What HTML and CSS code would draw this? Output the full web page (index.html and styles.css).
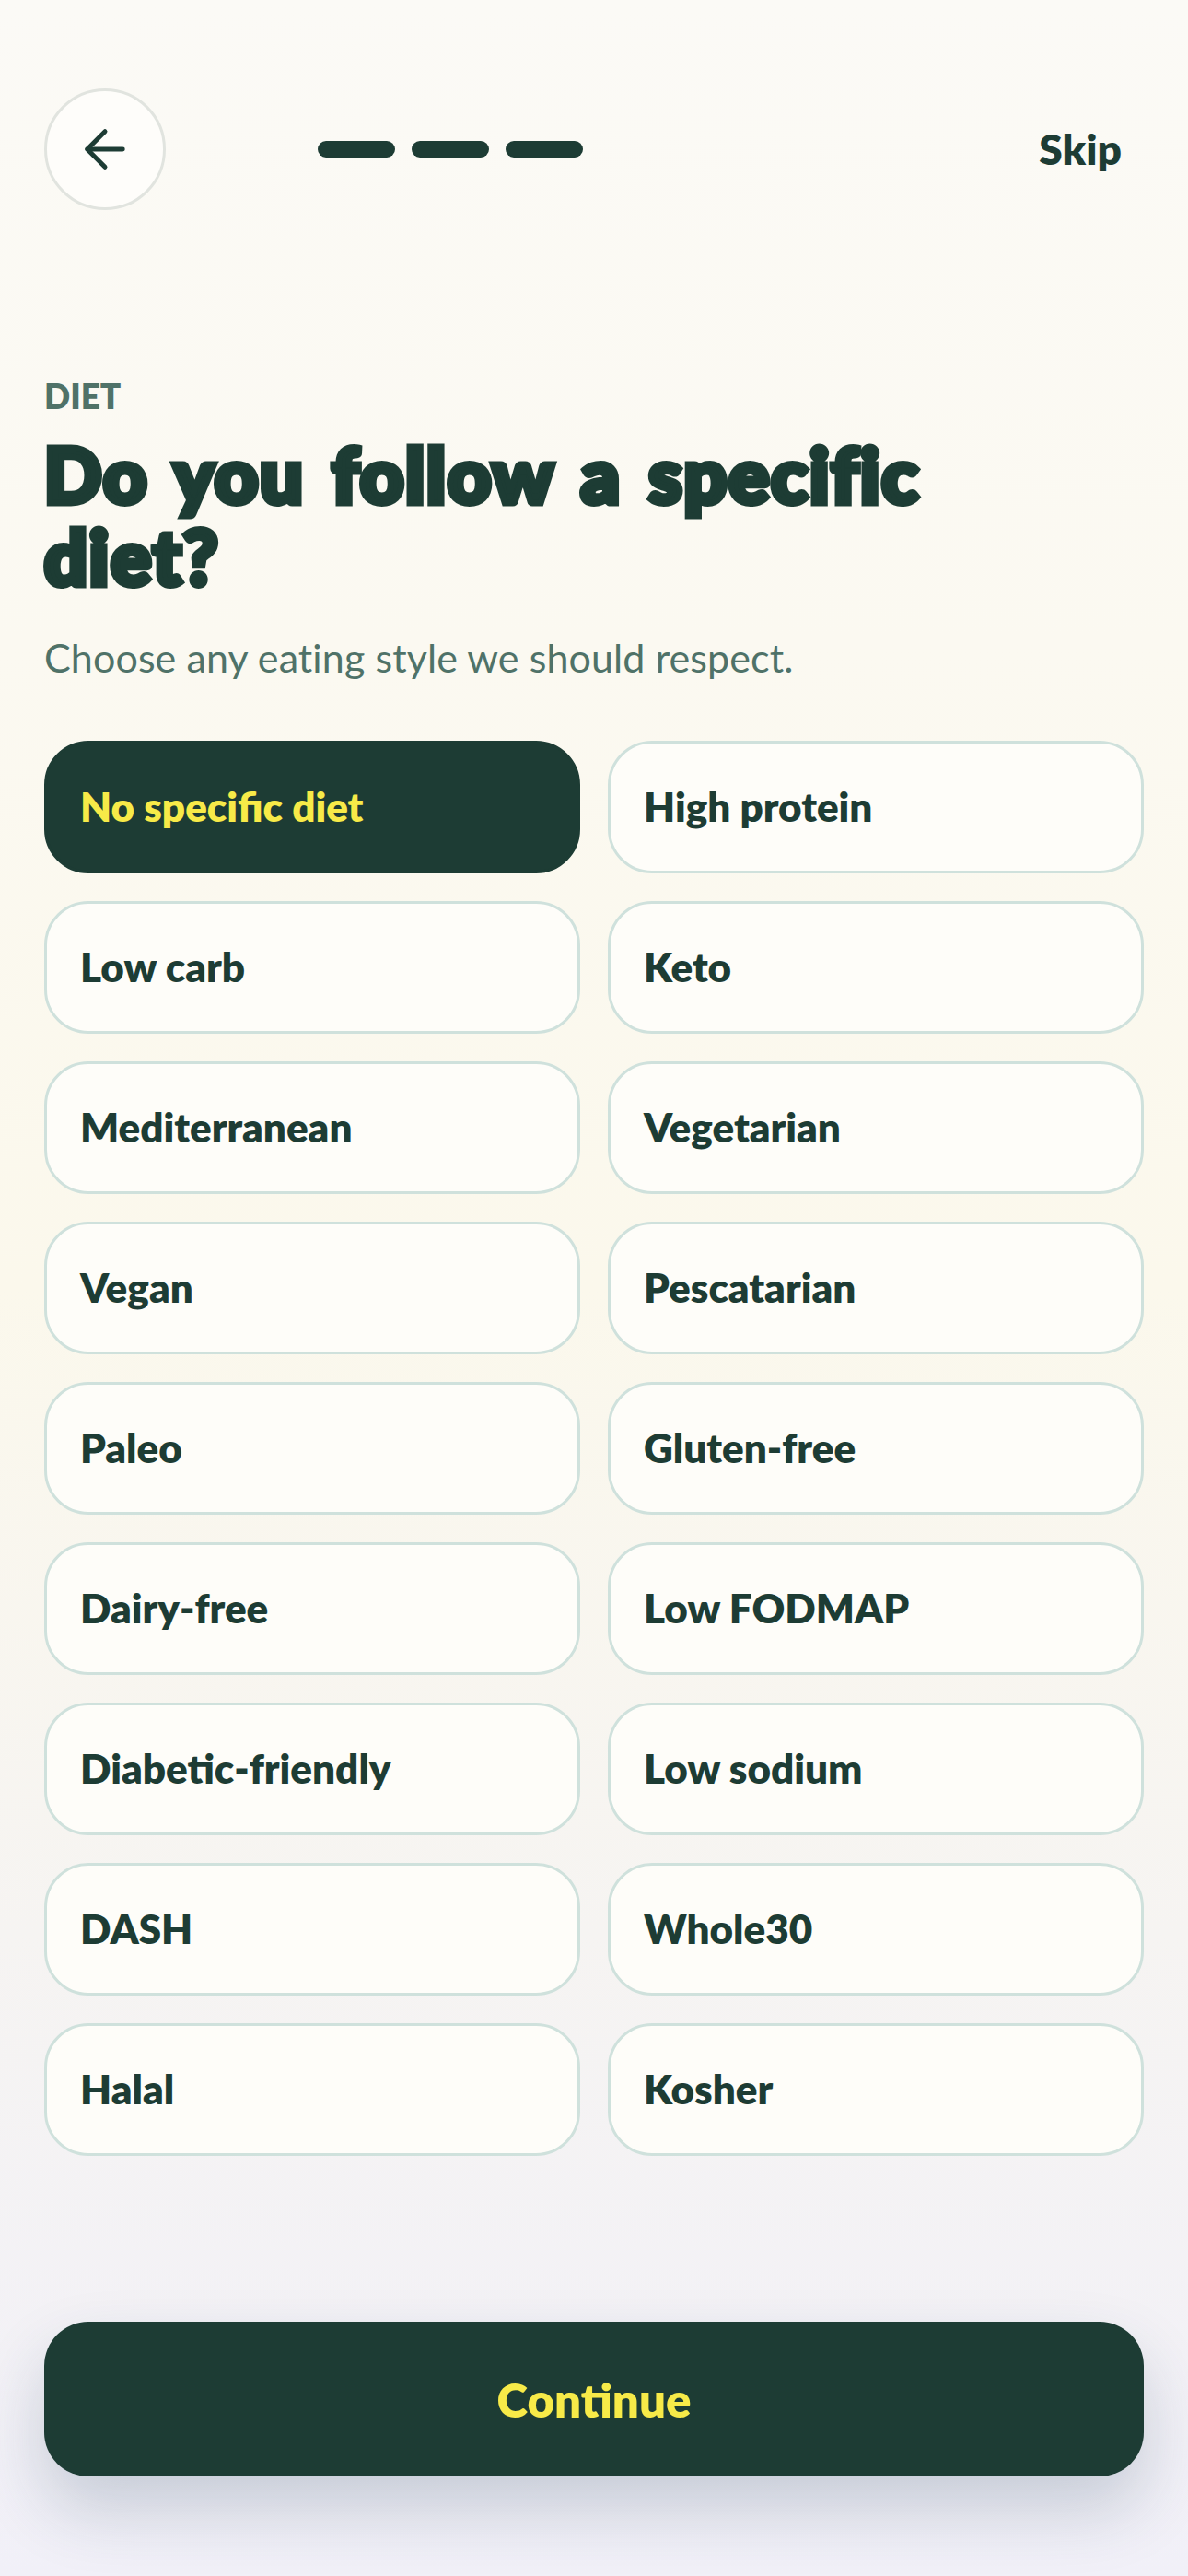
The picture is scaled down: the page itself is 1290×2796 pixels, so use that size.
FILE: index.html
```html
<!DOCTYPE html>
<html lang="en">
<head>
    <meta charset="UTF-8">
    <meta name="viewport" content="width=device-width, initial-scale=1.0">
    <title>Diet</title>
    <link rel="stylesheet" href="styles.css">
</head>
<body>
    <div class="screen">
        <header class="topbar">
            <button class="back-btn" aria-label="Back">
                <svg viewBox="0 0 24 24" width="66" height="66" fill="none" stroke="#1d3c34" stroke-width="1.8" stroke-linecap="round" stroke-linejoin="round">
                    <path d="M19 12H5"></path>
                    <path d="M12 19l-7-7 7-7"></path>
                </svg>
            </button>
            <div class="progress">
                <span class="progress-step"></span>
                <span class="progress-step"></span>
                <span class="progress-step"></span>
            </div>
            <button class="skip-btn">Skip</button>
        </header>

        <main class="content">
            <div class="eyebrow">DIET</div>
            <h1 class="title">Do you follow a specific diet?</h1>
            <p class="subtitle">Choose any eating style we should respect.</p>

            <div class="options">
                <button class="option selected">No specific diet</button>
                <button class="option">High protein</button>
                <button class="option">Low carb</button>
                <button class="option">Keto</button>
                <button class="option">Mediterranean</button>
                <button class="option">Vegetarian</button>
                <button class="option">Vegan</button>
                <button class="option">Pescatarian</button>
                <button class="option">Paleo</button>
                <button class="option">Gluten-free</button>
                <button class="option">Dairy-free</button>
                <button class="option">Low FODMAP</button>
                <button class="option">Diabetic-friendly</button>
                <button class="option">Low sodium</button>
                <button class="option">DASH</button>
                <button class="option">Whole30</button>
                <button class="option">Halal</button>
                <button class="option">Kosher</button>
            </div>
        </main>

        <button class="continue-btn">Continue</button>
    </div>
</body>
</html>
```

FILE: styles.css
```css
* {
    box-sizing: border-box;
}

html, body {
    margin: 0;
    padding: 0;
}

body {
    font-family: "Lato", "Liberation Sans", sans-serif;
    color: #1d3c34;
    height: 100vh;
    overflow: hidden;
    background: linear-gradient(180deg, #fbfaf6 0%, #fbf8ec 50%, #f1f0f8 100%);
}

button {
    font-family: inherit;
    cursor: pointer;
}

.screen {
    height: 100%;
    display: flex;
    flex-direction: column;
    padding: 96px 48px 108px;
}

.topbar {
    display: flex;
    align-items: center;
    height: 132px;
}

.back-btn {
    width: 132px;
    height: 132px;
    border: 3px solid #e1e4df;
    border-radius: 50%;
    background-color: #fefdfa;
    display: flex;
    align-items: center;
    justify-content: center;
    padding: 0;
}

.progress {
    display: flex;
    gap: 18px;
    margin-left: 165px;
}

.progress-step {
    width: 84px;
    height: 18px;
    border-radius: 9px;
    background-color: #1d3c34;
}

.skip-btn {
    margin-left: auto;
    margin-right: 24px;
    padding: 0 0 2px;
    border: none;
    background: none;
    color: #1d3c34;
    font-size: 46px;
    font-weight: 800;
}

.content {
    margin-top: 179px;
}

.eyebrow {
    font-size: 37px;
    line-height: 46px;
    font-weight: 800;
    color: #4f7268;
}

.title {
    margin: 17px 0 0;
    max-width: 1040px;
    font-family: "Lato", "Liberation Sans", sans-serif;
    font-size: 82px;
    line-height: 89px;
    font-weight: 900;
    letter-spacing: 2px;
    word-spacing: 8px;
    color: #1d3c34;
    -webkit-text-stroke: 7px #1d3c34;
}

.subtitle {
    margin: 39px 0 0;
    font-size: 43px;
    line-height: 54px;
    letter-spacing: 0.1px;
    color: #4f7268;
}

.options {
    margin-top: 63px;
    display: grid;
    grid-template-columns: 582px 582px;
    gap: 30px;
}

.option {
    height: 144px;
    padding: 0 36px 2px;
    border: 3px solid #cfe1dc;
    border-radius: 48px;
    background-color: #fefdf9;
    color: #1d3c34;
    font-size: 44px;
    font-weight: 800;
    text-align: left;
}

.option.selected {
    background-color: #1d3c34;
    border-color: #1d3c34;
    color: #f7ea48;
}

.continue-btn {
    margin-top: auto;
    height: 168px;
    flex-shrink: 0;
    border: none;
    border-radius: 48px;
    background-color: #1d3c34;
    color: #f7ea48;
    font-size: 51px;
    font-weight: 800;
    box-shadow: 0 36px 72px rgba(31, 60, 90, 0.2);
}
```
